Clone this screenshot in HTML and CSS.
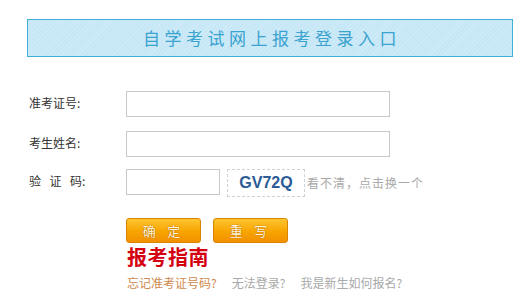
FILE: index.html
```html
<!DOCTYPE html>
<html lang="zh-CN">
<head>
<meta charset="utf-8">
<link rel="stylesheet" href="styles.css">
</head>
<body>
<div class="page">
  <div class="banner">自学考试网上报考登录入口</div>
  <form class="form">
    <div class="row r1">
      <label class="lbl">准考证号:</label>
      <input class="inp wide" type="text">
    </div>
    <div class="row r2">
      <label class="lbl">考生姓名:</label>
      <input class="inp wide" type="text">
    </div>
    <div class="row r3">
      <label class="lbl"><span class="spaced">验证</span>码:</label>
      <input class="inp short" type="text">
      <span class="captcha">GV72Q</span>
      <span class="hint">看不清，点击换一个</span>
    </div>
    <div class="btns">
      <button type="button" class="btn">确&nbsp;&nbsp;&nbsp;&nbsp;定</button>
      <button type="button" class="btn">重&nbsp;&nbsp;&nbsp;&nbsp;写</button>
    </div>
    <div class="guide">报考指南</div>
    <div class="links">
      <a class="lk first">忘记准考证号码?</a>
      <a class="lk">无法登录?</a>
      <a class="lk">我是新生如何报名?</a>
    </div>
  </form>
</div>
</body>
</html>
```

FILE: styles.css
```css
html, body {
  margin: 0;
  padding: 0;
  background: #fff;
}
body {
  font-family: "Noto Sans CJK SC", "Liberation Sans", sans-serif;
  font-size: 12px;
  color: #333;
}
.page {
  padding: 19px 0 0 27px;
}
.banner {
  box-sizing: border-box;
  width: 486px;
  height: 38px;
  border: 1px solid #3fb0d5;
  background-color: #c6e7f6;
  background-image: repeating-linear-gradient(135deg, rgba(255,255,255,0.18) 0 1px, transparent 1px 3px);
  color: #3ba3cf;
  font-size: 17px;
  letter-spacing: 4.5px;
  text-align: center;
  line-height: 36px;
  padding-left: 4px;
}
.form {
  margin: 0;
  padding-left: 2px;
}
.row {
  display: flex;
  align-items: center;
  height: 26px;
}
.r1 { margin-top: 34px; }
.r2 { margin-top: 14px; }
.r3 { margin-top: 12px; }
.lbl {
  width: 97px;
  flex: none;
  font-size: 12px;
  color: #333;
  margin-top: -3px;
}
.spaced {
  letter-spacing: 8.5px;
}
.inp {
  box-sizing: border-box;
  height: 26px;
  border: 1px solid #c8c8c8;
  padding: 0 4px;
  margin: 0;
  font-size: 12px;
  background: #fff;
  outline: none;
}
.wide { width: 264px; }
.short { width: 94px; }
.captcha {
  box-sizing: border-box;
  margin-left: 7px;
  width: 78px;
  height: 28px;
  border: 1px dashed #cfd3d8;
  display: flex;
  align-items: center;
  justify-content: center;
  font-family: "Liberation Sans", Arial, sans-serif;
  font-weight: bold;
  font-size: 16px;
  color: #2c5b95;
  margin-top: 2px;
}
.hint {
  margin-left: 2px;
  color: #a8a8a8;
  font-size: 12px;
  letter-spacing: 1px;
}
.btns {
  display: flex;
  gap: 12px;
  margin-top: 23px;
  padding-left: 97px;
}
.btn {
  box-sizing: border-box;
  width: 75px;
  height: 25px;
  border: 1px solid #d98500;
  border-radius: 3px;
  background: linear-gradient(#ffc530, #f7a400 55%, #f39000);
  color: #fff6dc;
  font-family: "Noto Sans CJK SC", sans-serif;
  font-size: 13px;
  text-shadow: 0 0 1px #b86a00, 0 0 1px #b86a00;
  padding: 0 4px 0 0;
  line-height: 23px;
}
.guide {
  padding-left: 98px;
  margin-top: 1px;
  font-size: 20px;
  font-weight: bold;
  color: #d4000f;
  line-height: 26px;
  letter-spacing: 0.5px;
}
.links {
  padding-left: 98px;
  margin-top: 5px;
  display: flex;
  gap: 15px;
  font-size: 12px;
  line-height: 16px;
}
.lk {
  color: #a9a9a9;
  text-decoration: none;
}
.lk.first {
  color: #cf8a4f;
}
```
